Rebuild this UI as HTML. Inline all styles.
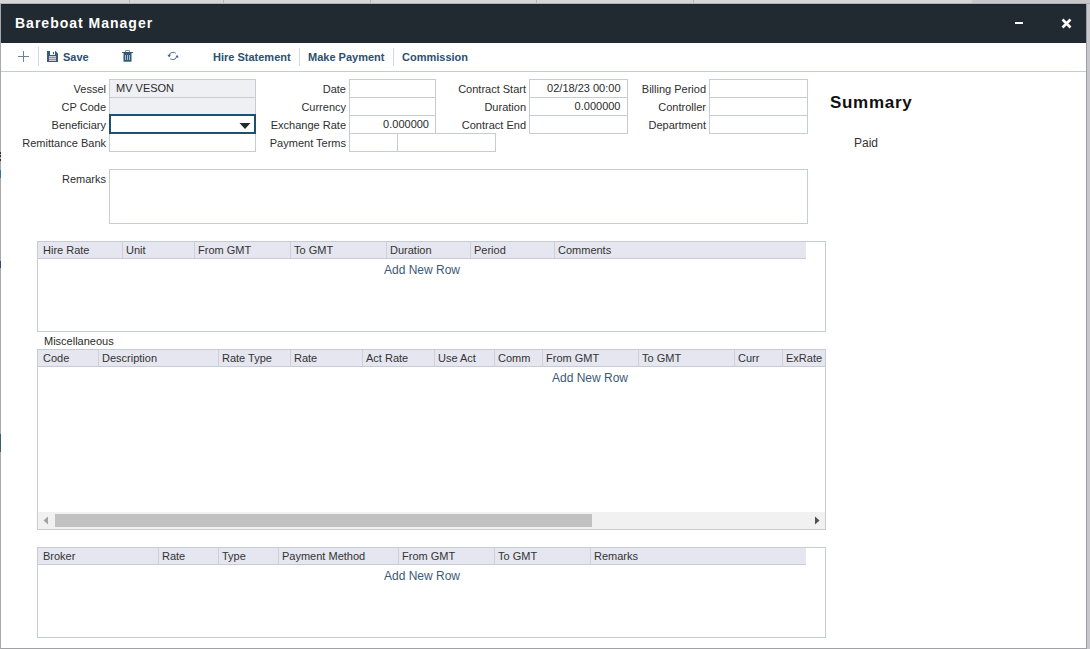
<!DOCTYPE html><html><head><meta charset="utf-8"><style>
*{box-sizing:border-box;margin:0;padding:0}
html,body{width:1090px;height:649px;overflow:hidden;background:#c8c7cc;font-family:"Liberation Sans",sans-serif;}
div,span,svg{position:absolute}
.lbl{font-size:11px;color:#2e2e2e;line-height:13px;white-space:nowrap;text-align:right}
.inp{border:1px solid #c5ccd5;background:#fff}
.ro{background:#eff0f3}
.val{font-size:11px;color:#2a2a2a;line-height:13px;white-space:nowrap}
.grid{border:1px solid #c5ccd4;background:#fff}
.gh{background:#e5e6ef;border-bottom:1px solid #c5ccd4;height:17px;left:0;top:0}
.gc{top:0;height:16px;border-left:1px solid #ccd1da;font-size:11px;color:#333;line-height:16px;padding-left:3px;white-space:nowrap}
.anr{font-size:12px;color:#3d5a75;line-height:14px;white-space:nowrap}
.tbt{font-size:11px;font-weight:bold;color:#2c5070;line-height:13px;white-space:nowrap}
.sep{width:1px;background:#d2d8de}
</style></head><body>
<div style="left:0;top:0;width:972px;height:3px;background:#d6d6d6"></div>
<div style="left:0;top:3px;width:972px;height:1px;background:#b4b4b4"></div>
<div style="left:972px;top:3px;width:118px;height:1px;background:#b0b0b5"></div>
<div style="left:129px;top:0;width:1px;height:4px;background:#b3b7be"></div>
<div style="left:223px;top:0;width:1px;height:4px;background:#b3b7be"></div>
<div style="left:370px;top:0;width:1px;height:4px;background:#b3b7be"></div>
<div style="left:536px;top:0;width:1px;height:4px;background:#b3b7be"></div>
<div style="left:693px;top:0;width:1px;height:4px;background:#b3b7be"></div>
<div style="left:0;top:4px;width:1px;height:645px;background:#a8a8aa"></div>
<div style="left:0;top:152px;width:1px;height:2px;background:#333"></div>
<div style="left:0;top:155px;width:1px;height:2px;background:#333"></div>
<div style="left:0;top:159px;width:1px;height:2px;background:#333"></div>
<div style="left:0;top:170px;width:1px;height:8px;background:#2f7a9a"></div>
<div style="left:0;top:261px;width:1px;height:7px;background:#3a4a6a"></div>
<div style="left:0;top:434px;width:1px;height:18px;background:#3a6070"></div>
<div style="left:1086px;top:4px;width:1px;height:645px;background:#9c9da2"></div>
<div style="left:1px;top:648px;width:1086px;height:1px;background:#a0a0a5"></div>
<div style="left:1px;top:4px;width:1085px;height:644px;background:#fff"></div>
<div style="left:1px;top:4px;width:1085px;height:39px;background:#222a31;border-top:1px solid #1a2329"></div>
<div style="left:15px;top:15px;color:#fff;font-size:14px;font-weight:bold;letter-spacing:1px;line-height:17px;white-space:nowrap">Bareboat Manager</div>
<div style="left:1015px;top:22px;width:8px;height:2px;background:#fff"></div>
<svg style="left:1061px;top:18px" width="11" height="11" viewBox="0 0 11 11"><path d="M1.5 1.5L9.5 9.5M9.5 1.5L1.5 9.5" stroke="#fff" stroke-width="2.6"/></svg>
<div style="left:1px;top:71px;width:1085px;height:1px;background:#c3cbd5"></div>
<svg style="left:18px;top:50px" width="12" height="13" viewBox="0 0 12 13"><path d="M5.5 1V12M0 6.5H11" stroke="#6f8396" stroke-width="1"/></svg>
<div class="sep" style="left:38px;top:47px;height:19px"></div>
<svg style="left:47px;top:51px" width="11" height="11" viewBox="0 0 11 11"><path d="M0 0H8.5L11 2.5V11H0Z" fill="#325e7d"/><rect x="3" y="0" width="5" height="4" fill="#fff"/><rect x="6" y="1" width="1" height="2.2" fill="#2e5a78"/><rect x="2" y="5" width="7" height="5" fill="#c7ccd6"/><rect x="2" y="6" width="7" height="1" fill="#8e99ab"/><rect x="2" y="8" width="7" height="1" fill="#8e99ab"/></svg>
<div class="tbt" style="left:63px;top:51px">Save</div>
<svg style="left:122px;top:50px" width="11" height="12" viewBox="0 0 11 12"><path d="M3.5 2V0.5H7.5V2" fill="none" stroke="#8394a6" stroke-width="1"/><rect x="0" y="2" width="11" height="1" fill="#2d5a78"/><rect x="1.5" y="3" width="8" height="8.7" fill="#2d5a78"/><rect x="3" y="5" width="1" height="5" fill="#aeb7c6"/><rect x="5" y="5" width="1" height="5" fill="#aeb7c6"/><rect x="7" y="5" width="1" height="5" fill="#aeb7c6"/></svg>
<svg style="left:165px;top:48px" width="16" height="14" viewBox="0 0 16 14"><path d="M4.3 7Q5 4.4 8 4.3Q10 4.3 10.8 5.4M11.2 9.6Q10.8 11.5 8 11.5Q6 11.5 5.2 10.8" fill="none" stroke="#4a6d8a" stroke-width="0.95"/><path d="M2.4 6.8H5.9L4.2 9.5Z M10.3 9.5H13.8L12 6.8Z" fill="#3f6585"/></svg>
<div class="tbt" style="left:213px;top:51px">Hire Statement</div>
<div class="sep" style="left:299px;top:48px;height:18px"></div>
<div class="tbt" style="left:308px;top:51px">Make Payment</div>
<div class="sep" style="left:393px;top:48px;height:18px"></div>
<div class="tbt" style="left:402px;top:51px">Commission</div>
<div class="lbl" style="right:984px;top:83px">Vessel</div>
<div class="lbl" style="right:984px;top:101px">CP Code</div>
<div class="lbl" style="right:984px;top:119px">Beneficiary</div>
<div class="lbl" style="right:984px;top:137px">Remittance Bank</div>
<div class="inp ro" style="left:109px;top:79px;width:147px;height:19px"></div>
<div class="inp ro" style="left:109px;top:97px;width:147px;height:19px"></div>
<div class="inp " style="left:109px;top:133px;width:147px;height:19px"></div>
<div style="left:109px;top:114px;width:147px;height:20px;border:2px solid #1c5270;background:#fff"></div>
<svg style="left:239px;top:123px" width="12" height="6" viewBox="0 0 12 6"><path d="M0.5 0H11.5L6 6Z" fill="#222a30"/></svg>
<div class="val" style="left:116px;top:82px">MV VESON</div>
<div class="lbl" style="right:744px;top:83px">Date</div>
<div class="lbl" style="right:744px;top:101px">Currency</div>
<div class="lbl" style="right:744px;top:119px">Exchange Rate</div>
<div class="lbl" style="right:744px;top:137px">Payment Terms</div>
<div class="inp " style="left:349px;top:79px;width:87px;height:19px"></div>
<div class="inp " style="left:349px;top:97px;width:87px;height:19px"></div>
<div class="inp " style="left:349px;top:115px;width:87px;height:19px"></div>
<div class="inp " style="left:349px;top:133px;width:49px;height:19px"></div>
<div class="inp " style="left:397px;top:133px;width:99px;height:19px"></div>
<div class="val" style="right:661px;top:118px">0.000000</div>
<div class="lbl" style="right:564px;top:83px">Contract Start</div>
<div class="lbl" style="right:564px;top:101px">Duration</div>
<div class="lbl" style="right:564px;top:119px">Contract End</div>
<div class="inp " style="left:529px;top:79px;width:99px;height:19px"></div>
<div class="inp " style="left:529px;top:97px;width:99px;height:19px"></div>
<div class="inp " style="left:529px;top:115px;width:99px;height:19px"></div>
<div class="val" style="right:469.5px;top:82px">02/18/23 00:00</div>
<div class="val" style="right:469.5px;top:100px">0.000000</div>
<div class="lbl" style="right:384px;top:83px">Billing Period</div>
<div class="lbl" style="right:384px;top:101px">Controller</div>
<div class="lbl" style="right:384px;top:119px">Department</div>
<div class="inp " style="left:709px;top:79px;width:99px;height:19px"></div>
<div class="inp " style="left:709px;top:97px;width:99px;height:19px"></div>
<div class="inp " style="left:709px;top:115px;width:99px;height:19px"></div>
<div style="left:830px;top:93px;font-size:17px;font-weight:bold;color:#111;line-height:20px;letter-spacing:0.7px;white-space:nowrap">Summary</div>
<div style="left:854px;top:136px;font-size:12px;color:#333;line-height:14px;white-space:nowrap">Paid</div>
<div class="lbl" style="right:984px;top:173px">Remarks</div>
<div class="inp " style="left:109px;top:169px;width:699px;height:55px"></div>
<div class="grid" style="left:37px;top:241px;width:789px;height:91px">
<div class="gh" style="width:768px">
<div class="gc" style="left:-1px;border-left:none;padding-left:6px;">Hire Rate</div>
<div class="gc" style="left:84px;">Unit</div>
<div class="gc" style="left:156px;">From GMT</div>
<div class="gc" style="left:252px;">To GMT</div>
<div class="gc" style="left:348px;">Duration</div>
<div class="gc" style="left:432px;">Period</div>
<div class="gc" style="left:516px;">Comments</div>
</div>
<div class="anr" style="left:346px;top:21px">Add New Row</div>
</div>
<div class="val" style="left:44px;top:335px">Miscellaneous</div>
<div class="grid" style="left:37px;top:349px;width:789px;height:181px">
<div class="gh" style="width:787px">
<div class="gc" style="left:-1px;border-left:none;padding-left:6px;">Code</div>
<div class="gc" style="left:60px;">Description</div>
<div class="gc" style="left:180px;">Rate Type</div>
<div class="gc" style="left:252px;">Rate</div>
<div class="gc" style="left:324px;">Act Rate</div>
<div class="gc" style="left:396px;">Use Act</div>
<div class="gc" style="left:456px;">Comm</div>
<div class="gc" style="left:504px;">From GMT</div>
<div class="gc" style="left:600px;">To GMT</div>
<div class="gc" style="left:696px;">Curr</div>
<div class="gc" style="left:744px;">ExRate</div>
</div>
<div class="anr" style="left:514px;top:21px">Add New Row</div>
<div style="left:0;top:162px;width:787px;height:17px;background:#f1f1f1"></div>
<div style="left:17px;top:164px;width:537px;height:13px;background:#c1c1c1"></div>
<svg style="left:5px;top:166px" width="6" height="9" viewBox="0 0 6 9"><path d="M5 0.5V8.5L0.5 4.5Z" fill="#a3a3a3"/></svg>
<svg style="left:776px;top:166px" width="6" height="9" viewBox="0 0 6 9"><path d="M1 0.5V8.5L5.5 4.5Z" fill="#505050"/></svg>
</div>
<div class="grid" style="left:37px;top:547px;width:789px;height:91px">
<div class="gh" style="width:768px">
<div class="gc" style="left:-1px;border-left:none;padding-left:6px;">Broker</div>
<div class="gc" style="left:120px;">Rate</div>
<div class="gc" style="left:180px;">Type</div>
<div class="gc" style="left:240px;">Payment Method</div>
<div class="gc" style="left:360px;">From GMT</div>
<div class="gc" style="left:456px;">To GMT</div>
<div class="gc" style="left:552px;">Remarks</div>
</div>
<div class="anr" style="left:346px;top:21px">Add New Row</div>
</div>
</body></html>
